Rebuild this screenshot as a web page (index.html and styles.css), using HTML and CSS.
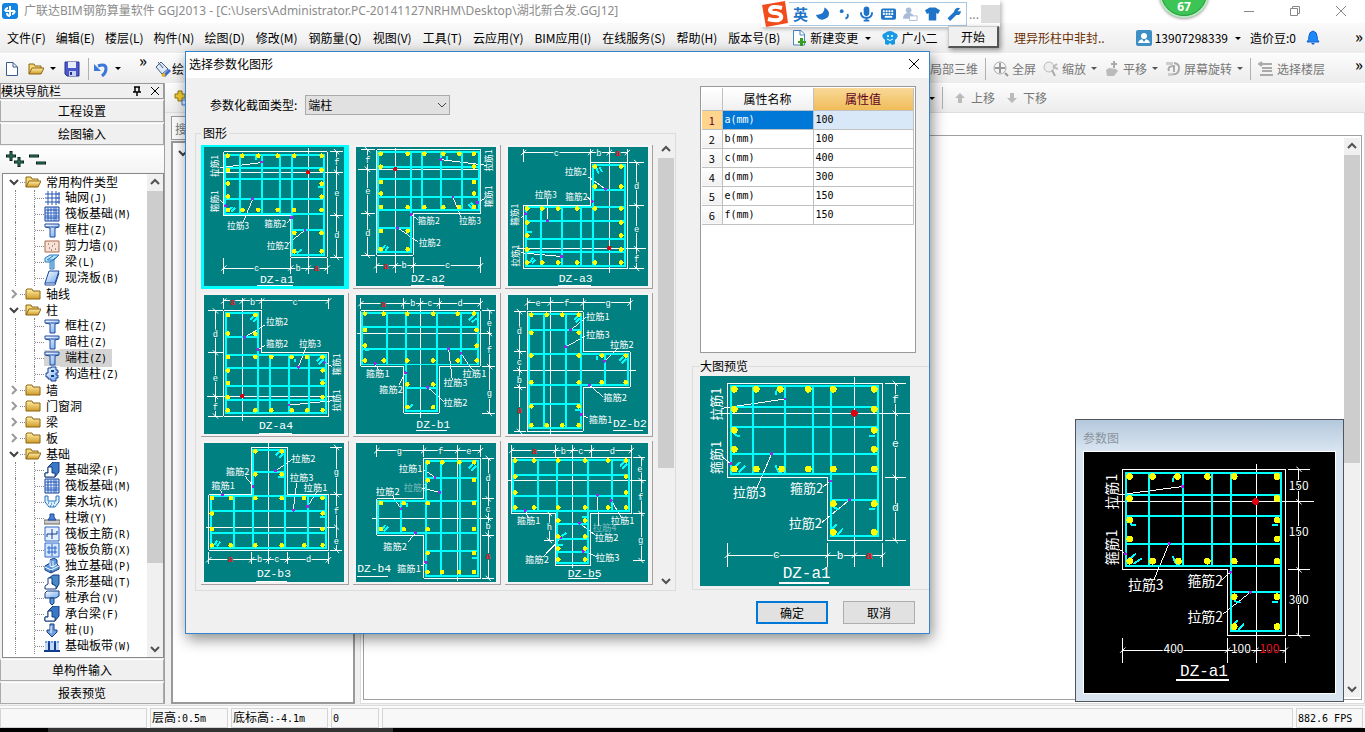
FILE: index.html
```html
<!DOCTYPE html>
<html lang="zh-CN">
<head>
<meta charset="utf-8">
<title>广联达BIM钢筋算量软件 GGJ2013</title>
<link rel="stylesheet" href="styles.css">
</head>
<body>
<svg class="defs" aria-hidden="true">
  <defs>
    <marker id="tick" markerUnits="userSpaceOnUse" markerWidth="20" markerHeight="20" viewBox="-10 -10 20 20" orient="auto"><path d="M-8 8L8 -8" stroke="#fff" stroke-width="3"/></marker>
    <linearGradient id="gold" x2="0" y2="1"><stop offset="0" stop-color="#fff0a8"/><stop offset="1" stop-color="#d09a28"/></linearGradient>
    <linearGradient id="blue" x2="1" y2="1"><stop offset="0" stop-color="#fff"/><stop offset="1" stop-color="#6fa8ee"/></linearGradient>
    <symbol id="folder" viewBox="0 0 16 16"><path d="M1 4V13H15V5H8L7 3H2Z" fill="url(#gold)" stroke="#8c6414"/></symbol>
    <symbol id="open" viewBox="0 0 16 16"><path d="M1 13V3H6L7 5H13V7" fill="#f5d878" stroke="#8c6414"/><path d="M1 13L4 7H16L13 13Z" fill="url(#gold)" stroke="#8c6414"/></symbol>
    <symbol id="down" viewBox="0 0 12 12"><path d="M2 4L6 8L10 4" fill="none" stroke="currentColor" stroke-width="2"/></symbol>
    <symbol id="up" viewBox="0 0 12 12"><path d="M2 8L6 4L10 8" fill="none" stroke="currentColor" stroke-width="2"/></symbol>
    <symbol id="right" viewBox="0 0 12 12"><path d="M4 2L8 6L4 10" fill="none" stroke="currentColor" stroke-width="2"/></symbol>
    <symbol id="net" viewBox="0 0 16 16"><path d="M4 1V15M8 1V15M12 1V15M1 4H15M1 8H15M1 12H15" stroke="#2456b4" fill="none"/><path d="M14 3h2v2h-2zM14 7h2v2h-2zM14 11h2v2h-2z" fill="#fff" stroke="#2456b4"/></symbol>
    <symbol id="raft" viewBox="0 0 16 16"><path d="M1 1H15V15H1Z" fill="#dceaff" stroke="#123c90" stroke-width="1"/><path d="M4 4H12V12H4Z" fill="#fff" stroke="#123c90"/><path d="M7 1V15M10 1V15M1 7H15M1 10H15M4 1V4M12 1V4M4 12V15M12 12V15M1 4H4M12 4H15M1 12H4M12 12H15" stroke="#2c66c8"/></symbol>
    <symbol id="col" viewBox="0 0 16 16"><path d="M1 2H15V5L11 6V15H6V6L1 5Z" fill="url(#blue)" stroke="#1c4aa0"/><path d="M2 5H14" stroke="#1c4aa0"/></symbol>
    <symbol id="wall" viewBox="0 0 16 16"><path d="M1 3H15V14H1Z" fill="#f6e2d6" stroke="#a86848"/><path d="M4 6h1M8 8h1M5 10h1M11 11h1M10 6h1M7 12h1" stroke="#704020" stroke-width="1"/></symbol>
    <symbol id="beam" viewBox="0 0 16 16"><path d="M1 4L6 1H15L10 6V15H6V8L1 8Z" fill="#b8e4fa" stroke="#2c78bc"/><path d="M3 6L9 2M6 8L14 2M8 14V7M10 6H4" stroke="#2c78bc"/></symbol>
    <symbol id="slab" viewBox="0 0 16 16"><path d="M5 1H15L11 13H1Z" fill="url(#blue)" stroke="#1c4aa0"/><path d="M1 13V15H11L15 3" fill="none" stroke="#1c4aa0"/></symbol>
    <symbol id="ccol" viewBox="0 0 16 16"><path d="M4 2H7V1H12V4H14V7H12V9H14V12H12V15H7V13H4V11H2V7H4Z" fill="url(#blue)" stroke="#123c90" stroke-width="1"/><path d="M7 5H10M7 10H10" stroke="#123c90" stroke-width="2"/></symbol>
    <symbol id="fbeam" viewBox="0 0 16 16"><path d="M1 15V11H4V5L9 0H15V10L11 15Z" fill="#3878c4" stroke="#123c80"/><path d="M1 15V11H4V5H8V11H11V15Z" fill="#fff" stroke="#123c80"/></symbol>
    <symbol id="strip" viewBox="0 0 16 16"><path d="M5 4L9 1H15V10L12 15Z" fill="#4888c8" stroke="#123c80"/><path d="M1 15V12L4 10V4H8V10L12 12V15Z" fill="#fff" stroke="#123c80"/></symbol>
    <symbol id="pit" viewBox="0 0 16 16"><path d="M1 2H4V7H12V2H15V8L11 13H5L1 8Z" fill="#d8f0ff" stroke="#2870c0"/><path d="M4 9h1M7 10h1M10 9h1M6 12h1M9 12h1" stroke="#105090"/></symbol>
    <symbol id="pier" viewBox="0 0 16 16"><path d="M0 10H16V14H0Z" fill="#ccc" stroke="#666"/><path d="M4 10L6 7V4H10V7L12 10Z" fill="#4a80d8" stroke="#1c4aa0"/></symbol>
    <symbol id="mesh" viewBox="0 0 16 16"><path d="M1 1H15V15H1Z" fill="#e4f0ff" stroke="#2c66c8"/><path d="M8 3V13M3 8H13M3 8V11M13 8V5" stroke="#123c90" fill="none"/></symbol>
    <symbol id="mesh2" viewBox="0 0 16 16"><path d="M1 1H15V15H1Z" fill="#d4e6ff" stroke="#2c66c8"/><path d="M8 2V14M3 6H13M3 10H13M5 4V12M11 4V12" stroke="#2c66c8" fill="none"/></symbol>
    <symbol id="found" viewBox="0 0 16 16"><path d="M1 8L6 5V2L10 0L13 2V6L15 8V11L7 15L1 12Z" fill="#5a98dc" stroke="#123c80"/><path d="M6 2V8L9 9V3M1 9L7 12L15 8M9 9L13 6" fill="none" stroke="#fff"/><path d="M7 12V15" stroke="#123c80"/></symbol>
    <symbol id="cap" viewBox="0 0 16 16"><path d="M1 3L3 1H15V6L12 8H1Z" fill="url(#blue)" stroke="#123c80"/><path d="M6 8V13L8 15L10 13V8Z" fill="#5a98dc" stroke="#123c80"/></symbol>
    <symbol id="pile" viewBox="0 0 16 16"><path d="M6 2H10V8H13V10L8 15L3 10V8H6Z" fill="#6fa0e0" stroke="#123c80"/><path d="M7 4V11" stroke="#fff"/></symbol>
    <symbol id="band" viewBox="0 0 16 16"><path d="M1 3H15V14H1Z" fill="#c4d8fa"/><path d="M0 13H16M5 3V13M11 3V13" stroke="#123c90" stroke-width="2"/><path d="M1 4H15" stroke="#2c66c8" stroke-dasharray="2 1"/></symbol>
  </defs>
</svg>
<div class="app">
  <header class="titlebar">
    <svg class="logo" viewBox="0 0 16 16"><rect width="16" height="16" rx="3" fill="#1583e0"/><path d="M3 8H13M8 3V13M3 8Q4 5 6 5M13 8Q12 11 10 11M8 13Q5 13 5 10" stroke="#fff" stroke-width="2" fill="none"/></svg>
    <h1>广联达BIM钢筋算量软件 GGJ2013 - [C:\Users\Administrator.PC-20141127NRHM\Desktop\湖北新合发.GGJ12]</h1>
    <div class="winbtns">
      <button aria-label="最小化"><svg viewBox="0 0 12 12"><path d="M1 6.500H11" stroke="#888"/></svg></button>
      <button aria-label="还原"><svg viewBox="0 0 12 12"><path d="M1.500 3.500H8.500V10.500H1.500ZM3.500 3.500V1.500H10.500V8.500H8.500" fill="none" stroke="#888"/></svg></button>
      <button aria-label="关闭"><svg viewBox="0 0 12 12"><path d="M1 1L11 11M11 1L1 11" stroke="#888"/></svg></button>
    </div>
  </header>
  <nav class="menubar">
    <button>文件(F)</button><button>编辑(E)</button><button>楼层(L)</button><button>构件(N)</button><button>绘图(D)</button><button>修改(M)</button><button>钢筋量(Q)</button><button>视图(V)</button><button>工具(T)</button><button>云应用(Y)</button><button>BIM应用(I)</button><button>在线服务(S)</button><button>帮助(H)</button><button>版本号(B)</button>
    <button class="ic"><svg class="i16" viewBox="0 0 16 16"><path d="M2.500 .5H10L13.500 4V15H2.500Z" fill="#fff" stroke="#4a88c0"/><path d="M9 .5V5H13" fill="none" stroke="#4a88c0"/><path d="M9 8h3v3h3v2h-3v3h-3v-3H7v-2h2z" fill="#38a020"/></svg>新建变更<i class="tri"></i></button>
    <button class="ic"><svg class="i16" viewBox="0 0 16 16"><path d="M3 3Q8 -1 13 3Q17 4 15 8L13 10V14L10 15L8 13L6 15L3 14V10L1 8Q-1 4 3 3Z" fill="#189ae8"/><circle cx="6" cy="6" r="1" fill="#fff"/><circle cx="10" cy="6" r="1" fill="#fff"/><path d="M5 9Q8 12 11 9" stroke="#fff" fill="none"/></svg>广小二</button>
    <div class="account">
      <a class="news" href="#">理异形柱中非封..</a>
      <button class="ic"><svg class="i16" viewBox="0 0 16 16"><rect width="16" height="16" rx="2" fill="#3d8fc4"/><circle cx="8" cy="6" r="3" fill="#fff"/><path d="M2 13Q3 9 8 9T14 13Z" fill="#fff"/><path d="M6 9L8 12L10 9" fill="#3d8fc4"/></svg>13907298339<i class="tri"></i></button>
      <span>造价豆:0</span>
      <svg class="i16" viewBox="0 0 16 16"><path d="M2 12Q4 10 4 6Q4 2 8 1Q12 2 12 6Q12 10 14 12Z" fill="#1e88f8" stroke="#1460c8"/><path d="M6 13H10L8 15Z" fill="#1460c8"/></svg>
      <b class="more">»</b>
    </div>
  </nav>
  <div class="toolbar">
    <button aria-label="新建"><svg class="i16" viewBox="0 0 16 16"><path d="M2.500 1.500H9L13.500 6V14.500H2.500Z" fill="#fff" stroke="#3c5a8c"/><path d="M9 1.500V6H13" fill="none" stroke="#3c5a8c"/></svg></button>
    <button class="openbtn" aria-label="打开"><svg class="i16"><use href="#open"/></svg><i class="tri"></i></button>
    <button aria-label="保存"><svg class="i16" viewBox="0 0 16 16"><path d="M1 1H15V15H3L1 13Z" fill="#4a58c8" stroke="#283090"/><path d="M4 1H12V7H4Z" fill="#e8ecff"/><path d="M5 10H12V15H5Z" fill="#c8d0f0"/><path d="M6 11h2v3H6z" fill="#283090"/></svg></button>
    <i class="sep"></i>
    <button class="undo" aria-label="撤销"><svg class="i16" viewBox="0 0 16 16"><path d="M5 5Q13 2 13 8Q13 12 9 15" fill="none" stroke="#3c78dc" stroke-width="3"/><path d="M1 3V10H8Z" fill="#3c78dc"/></svg><i class="tri"></i></button>
    <b class="more">»</b>
    <button class="ic paint"><svg class="i16" viewBox="0 0 16 16"><path d="M6 1L13 8L7 13L1 6Z" fill="#dce8f8" stroke="#445a80"/><path d="M3 1L8 7" stroke="#445a80"/><path d="M9 15L15 9" stroke="#3868d0" stroke-width="3"/><path d="M7 15L10 13" stroke="#e8b020" stroke-width="3"/></svg>绘</button>
    <div class="viewtools">
      <button>局部三维</button><i class="sep"></i>
      <button class="ic"><svg class="i16" viewBox="0 0 16 16"><circle cx="7" cy="7" r="6" fill="none" stroke="#aaa"/><path d="M7 2V12M2 7H12M12 12L15 15" stroke="#999" stroke-width="2"/></svg>全屏</button>
      <button class="ic"><svg class="i16" viewBox="0 0 16 16"><circle cx="6" cy="6" r="5" fill="#eee" stroke="#bbb"/><path d="M9 9L12 15" stroke="#aaa" stroke-width="2"/><path d="M10 6L14 3M10 6L15 8" stroke="#bbb" stroke-width="2"/></svg>缩放<i class="tri"></i></button>
      <button class="ic"><svg class="i16" viewBox="0 0 16 16"><path d="M2 9L5 7L12 8L14 10L10 15H3Z" fill="#bbb"/><path d="M10 0V7M7 3H13" stroke="#aaa" stroke-width="2"/></svg>平移<i class="tri"></i></button>
      <button class="ic"><svg class="i16" viewBox="0 0 16 16"><path d="M1 1H8V4H1ZM3 12H8V15H3Z" fill="#ccc"/><path d="M9 2Q15 3 14 8Q13 14 8 13M4 10Q2 5 9 5V11" fill="none" stroke="#aaa" stroke-width="2"/></svg>屏幕旋转<i class="tri"></i></button>
      <i class="sep"></i>
      <button class="ic"><svg class="i16" viewBox="0 0 16 16"><path d="M1 3H14M4 7H14M4 10H14M2 14H15M4 1L1 3L4 5" fill="none" stroke="#aaa" stroke-width="2"/></svg>选择楼层</button>
      <b class="more">»</b>
    </div>
  </div>
  <main class="work">
    <aside class="dock">
      <div class="dockhead"><h2>模块导航栏</h2><svg class="i12" viewBox="0 0 12 12"><path d="M3 2H9M4 2V7M8 2V7M2 7H10M6 7V11" stroke="#000" stroke-width="1.500" fill="none"/></svg><svg class="i12" viewBox="0 0 12 12"><path d="M2 2L10 10M10 2L2 10" stroke="#000"/></svg></div>
      <button class="bar">工程设置</button>
      <button class="bar">绘图输入</button>
      <div class="treetools"><svg viewBox="0 0 40 16"><path d="M5 0V10M0 5H10M13 6V16M8 11H18M23 5H33M30 12H40" stroke="#082018" stroke-width="3"/><path d="M5 1V9M1 5H9M13 7V15M9 11H17M24 5H32M31 12H39" stroke="#2e8a68" stroke-width="1"/></svg></div>
      <div class="treebox">
        <ul class="tree">
          <li class="row"><svg class="i12"><use href="#down"/></svg><i class="st"></i><svg class="i16"><use href="#open"/></svg><span>常用构件类型</span></li>
          <li class="leaf"><i></i><i></i><svg class="i16"><use href="#net"/></svg><span>轴网<kbd>(J)</kbd></span></li>
          <li class="leaf"><i></i><i></i><svg class="i16"><use href="#raft"/></svg><span>筏板基础<kbd>(M)</kbd></span></li>
          <li class="leaf"><i></i><i></i><svg class="i16"><use href="#col"/></svg><span>框柱<kbd>(Z)</kbd></span></li>
          <li class="leaf"><i></i><i></i><svg class="i16"><use href="#wall"/></svg><span>剪力墙<kbd>(Q)</kbd></span></li>
          <li class="leaf"><i></i><i></i><svg class="i16"><use href="#beam"/></svg><span>梁<kbd>(L)</kbd></span></li>
          <li class="leaf"><i></i><i></i><svg class="i16"><use href="#slab"/></svg><span>现浇板<kbd>(B)</kbd></span></li>
          <li class="row shut"><svg class="i12"><use href="#right"/></svg><i class="st"></i><svg class="i16"><use href="#folder"/></svg><span>轴线</span></li>
          <li class="row"><svg class="i12"><use href="#down"/></svg><i class="st"></i><svg class="i16"><use href="#open"/></svg><span>柱</span></li>
          <li class="leaf"><i></i><i></i><svg class="i16"><use href="#col"/></svg><span>框柱<kbd>(Z)</kbd></span></li>
          <li class="leaf"><i></i><i></i><svg class="i16"><use href="#col"/></svg><span>暗柱<kbd>(Z)</kbd></span></li>
          <li class="leaf sel"><i></i><i></i><svg class="i16"><use href="#col"/></svg><span>端柱<kbd>(Z)</kbd></span></li>
          <li class="leaf"><i></i><i></i><svg class="i16"><use href="#ccol"/></svg><span>构造柱<kbd>(Z)</kbd></span></li>
          <li class="row shut"><svg class="i12"><use href="#right"/></svg><i class="st"></i><svg class="i16"><use href="#folder"/></svg><span>墙</span></li>
          <li class="row shut"><svg class="i12"><use href="#right"/></svg><i class="st"></i><svg class="i16"><use href="#folder"/></svg><span>门窗洞</span></li>
          <li class="row shut"><svg class="i12"><use href="#right"/></svg><i class="st"></i><svg class="i16"><use href="#folder"/></svg><span>梁</span></li>
          <li class="row shut"><svg class="i12"><use href="#right"/></svg><i class="st"></i><svg class="i16"><use href="#folder"/></svg><span>板</span></li>
          <li class="row"><svg class="i12"><use href="#down"/></svg><i class="st"></i><svg class="i16"><use href="#open"/></svg><span>基础</span></li>
          <li class="leaf"><i></i><i></i><svg class="i16"><use href="#fbeam"/></svg><span>基础梁<kbd>(F)</kbd></span></li>
          <li class="leaf"><i></i><i></i><svg class="i16"><use href="#raft"/></svg><span>筏板基础<kbd>(M)</kbd></span></li>
          <li class="leaf"><i></i><i></i><svg class="i16"><use href="#pit"/></svg><span>集水坑<kbd>(K)</kbd></span></li>
          <li class="leaf"><i></i><i></i><svg class="i16"><use href="#pier"/></svg><span>柱墩<kbd>(Y)</kbd></span></li>
          <li class="leaf"><i></i><i></i><svg class="i16"><use href="#mesh"/></svg><span>筏板主筋<kbd>(R)</kbd></span></li>
          <li class="leaf"><i></i><i></i><svg class="i16"><use href="#mesh2"/></svg><span>筏板负筋<kbd>(X)</kbd></span></li>
          <li class="leaf"><i></i><i></i><svg class="i16"><use href="#found"/></svg><span>独立基础<kbd>(P)</kbd></span></li>
          <li class="leaf"><i></i><i></i><svg class="i16"><use href="#strip"/></svg><span>条形基础<kbd>(T)</kbd></span></li>
          <li class="leaf"><i></i><i></i><svg class="i16"><use href="#cap"/></svg><span>桩承台<kbd>(V)</kbd></span></li>
          <li class="leaf"><i></i><i></i><svg class="i16"><use href="#fbeam"/></svg><span>承台梁<kbd>(F)</kbd></span></li>
          <li class="leaf"><i></i><i></i><svg class="i16"><use href="#pile"/></svg><span>桩<kbd>(U)</kbd></span></li>
          <li class="leaf"><i></i><i></i><svg class="i16"><use href="#band"/></svg><span>基础板带<kbd>(W)</kbd></span></li>
        </ul>
        <div class="scroll treescroll"><svg class="i12"><use href="#up"/></svg><i class="thumb"></i><i class="rest"></i><svg class="i12"><use href="#down"/></svg></div>
      </div>
      <button class="bar">单构件输入</button>
      <button class="bar">报表预览</button>
    </aside>
    <section class="stage">
      <div class="toolbar second">
        <svg class="i16" viewBox="0 0 16 16"><path d="M5 1h4v3h3v4H9v3H5V8H2V4h3z" fill="#f0cc30" stroke="#907010"/><path d="M9 10H15V15H9Z" fill="#dce8ff" stroke="#4878c0"/></svg>
        <div class="movetools"><i class="tri"></i><i class="sep"></i>
          <button class="ic"><svg class="i12" viewBox="0 0 12 12"><path d="M6 1L11 6H8V11H4V6H1Z" fill="#bbb"/></svg>上移</button>
          <button class="ic"><svg class="i12" viewBox="0 0 12 12"><path d="M6 11L11 6H8V1H4V6H1Z" fill="#bbb"/></svg>下移</button></div>
      </div>
      <div class="panes">
        <div class="listpane"><input type="text" aria-label="搜索构件" placeholder="搜索构件..."><div class="complist"><svg class="i12"><use href="#down"/></svg></div></div>
        <div class="canvaspane"><div class="canvas"><div class="scroll"><svg class="i12"><use href="#up"/></svg><i class="thumb"></i><i class="rest"></i><svg class="i12"><use href="#down"/></svg></div></div></div>
      </div>
    </section>
  </main>
  <footer class="status"><span class="s1"></span><span class="s2">层高<kbd>:0.5m</kbd></span><span class="s3">底标高<kbd>:-4.1m</kbd></span><span class="s4"><kbd>0</kbd></span><span class="s5"></span><span class="s6"><kbd>882.6 FPS</kbd></span></footer>
  <div class="taskbar"><i></i></div>
</div>

<div class="ime">
  <svg class="sogou" viewBox="0 0 28 28"><path d="M1 5L24 1L27 23L5 27Z" fill="#f04c1c"/><path d="M21 8Q10 5 9 10Q9 13 15 13Q21 14 20 18Q18 22 7 19" fill="none" stroke="#fff" stroke-width="4"/></svg>
  <div class="imebar">
    <b>英</b>
    <svg viewBox="0 0 16 16"><path d="M10 1Q11 8 1 9Q3 14 8 14Q15 13 15 7Q14 3 10 1Z" fill="#1e74c8"/></svg>
    <svg viewBox="0 0 16 16"><circle cx="5" cy="5" r="2" fill="#1e74c8"/><path d="M11 8Q13 11 9 13" stroke="#1e74c8" stroke-width="2" fill="none"/></svg>
    <svg viewBox="0 0 16 16"><rect x="5" width="6" height="10" rx="3" fill="#1e74c8"/><path d="M2 6Q2 12 8 12T14 6M8 12V15M5 15H11" fill="none" stroke="#1e74c8" stroke-width="2"/></svg>
    <svg viewBox="0 0 16 16"><rect y="2" width="16" height="12" rx="2" fill="#1e74c8"/><path d="M2 5H14M2 8H14" stroke="#fff" stroke-dasharray="2 1" stroke-width="2"/><path d="M4 11H12" stroke="#fff" stroke-width="2"/></svg>
    <svg viewBox="0 0 16 16"><circle cx="6" cy="4" r="3" fill="#a8bcd8"/><path d="M0 13Q0 7 6 7T12 13Z" fill="#a8bcd8"/><path d="M7 10H15V15H7Z" fill="#fff" stroke="#a8bcd8"/></svg>
    <svg viewBox="0 0 16 16"><path d="M5 1H11L16 4L14 8L12 7V15H4V7L2 8L0 4Z" fill="#1e74c8"/></svg>
    <svg viewBox="0 0 16 16"><path d="M2 14L9 7" stroke="#1e74c8" stroke-width="4"/><path d="M14 2L11 5L15 5Q14 10 10 9Q6 8 8 4Q10 0 14 2Z" fill="#1e74c8"/></svg>
  </div>
  <span class="dots">...</span><i class="blank"></i>
</div>
<button class="start">开始</button>
<div class="ball">67</div>

<section class="dialog" role="dialog" aria-labelledby="dlg">
  <header><h2 id="dlg">选择参数化图形</h2><button aria-label="关闭"><svg class="i12" viewBox="0 0 12 12"><path d="M1 1L11 11M11 1L1 11" stroke="#000"/></svg></button></header>
  <div class="dbody">
    <div class="left">
      <div class="kind"><label for="kind">参数化截面类型:</label><div class="combo"><select id="kind"><option>端柱</option></select><svg class="i12" viewBox="0 0 12 12"><path d="M2 4L6 8L10 4" fill="none" stroke="#444"/></svg></div></div>
      <fieldset class="shapes"><legend>图形</legend>
        <div class="grid">
          <button class="sel"><svg class="dz" viewBox="57 290 420 418"><path class="w" d="M116 304H427V622H317V496H116ZM370 293V672M90 366H475M116 625V672M317 625V672M427 625V672M435 304H475M435 496H475M435 622H475M105 352L228 337M203 446L175 515M105 450L121 467M305 520L320 502M310 580L360 540M217 706H323"/><path class="dim" d="M116 654H317H370H427"/><path class="dim" d="M455 304V366V496V622"/><path class="c" d="M121 313H418V490H121ZM165 313V490M230 313V490M284 313V490M321 313V615H418V490M121 352H418M121 387H418M121 446H418M321 540H418M130 482L140 470M138 485L150 472M212 318V330M400 410H416M335 610L350 598"/><path class="y" d="M128 316h0M172 316h0M220 316h0M278 316h0M328 316h0M410 316h0M128 359h0M410 359h0M128 400h0M410 400h0M128 439h0M410 439h0M128 479h0M172 479h0M220 479h0M278 479h0M328 479h0M410 479h0M328 548h0M410 548h0M328 604h0M410 604h0"/><path class="m" d="M230 335h0M203 446h0M121 467h0M320 502h0M360 540h0"/><path class="r" d="M370 366h0"/><text x="126" y="536">拉筋3</text><text x="238" y="532">箍筋2</text><text x="245" y="598">拉筋2</text><text transform="translate(100 380) rotate(-90)">拉筋1</text><text transform="translate(100 486) rotate(-90)">箍筋1</text><g class="d"><text x="448" y="345">f</text><text x="448" y="438">e</text><text x="448" y="564">d</text><text x="207" y="662">c</text><text x="332" y="662">b</text><text class="red" x="387" y="662">a</text></g><text class="n" x="225" y="700">DZ-a1</text></svg></button>
          <button><svg class="dz" viewBox="513 290 420 418"><path class="w" d="M575 298H887V490H685V616H575ZM631 292V668M520 357H887M575 622V668M685 622V668M887 622V668M528 298H570M528 490H570M528 616H570M768 328L905 345M804 440L828 500M878 457L900 445M678 493L700 510M638 533L698 575M678 706H777"/><path class="dim" d="M575 647H631H685H887"/><path class="dim" d="M547 298V357V490V616"/><path class="c" d="M580 304H881V480H580ZM678 304V605H580V480M711 304V480M768 304V480M830 304V480M580 349H881M580 387H881M580 440H881M580 533H678M858 458L870 470M850 463L862 475M590 600L600 585M600 602L610 590M785 316V328"/><path class="y" d="M587 310h0M668 310h0M718 310h0M775 310h0M823 310h0M867 310h0M587 349h0M867 349h0M587 395h0M867 395h0M587 430h0M867 430h0M587 471h0M668 471h0M718 471h0M775 471h0M823 471h0M867 471h0M587 542h0M668 542h0M587 598h0M668 598h0"/><path class="m" d="M768 328h0M804 440h0M878 457h0M678 493h0M638 533h0"/><path class="r" d="M631 357h0"/><text x="698" y="523">箍筋2</text><text x="822" y="523">拉筋3</text><text x="701" y="589">拉筋2</text><text transform="translate(920 364) rotate(-90)">拉筋1</text><text transform="translate(920 472) rotate(-90)">箍筋1</text><g class="d"><text x="540" y="338">f</text><text x="540" y="430">e</text><text x="540" y="558">d</text><text class="red" x="595" y="658">a</text><text x="649" y="654">b</text><text x="780" y="655">c</text></g><text class="n" x="678" y="696">DZ-a2</text></svg></button>
          <button><svg class="dz" viewBox="24 201 420 416"><path class="w" d="M71 377H272V247H382V565H71ZM328 200V578M50 506H438M71 205V245M272 205V247M382 205V247M387 247H432M387 377H432M387 565H432M265 290L317 327M262 350L277 364M142 355V422M62 415L76 401M62 518L185 529M174 615H272"/><path class="dim" d="M71 217H272H328H382"/><path class="dim" d="M410 247V377V506V565"/><path class="c" d="M78 381H375V558H78ZM123 381V558M186 381V558M243 381V558M279 558V255H375V381M78 423H375M78 477H375M78 515H375M279 329H375M288 262L296 280M298 260L306 276M82 455H96M88 548L100 532M96 550L106 538"/><path class="y" d="M284 259h0M364 259h0M284 319h0M364 319h0M82 385h0M127 385h0M175 385h0M232 385h0M284 385h0M364 385h0M82 427h0M364 427h0M82 466h0M364 466h0M82 508h0M364 508h0M82 547h0M127 547h0M175 547h0M232 547h0M284 547h0M364 547h0"/><path class="m" d="M317 327h0M277 364h0M142 422h0M76 401h0M185 529h0"/><path class="r" d="M328 504h0"/><text x="194" y="285">拉筋2</text><text x="104" y="354">拉筋3</text><text x="196" y="360">箍筋2</text><text transform="translate(55 437) rotate(-90)">箍筋1</text><text transform="translate(57 560) rotate(-90)">拉筋1</text><g class="d"><text x="161" y="229">c</text><text x="289" y="229">b</text><text class="red" x="346" y="228">a</text><text x="402" y="327">d</text><text x="402" y="457">e</text><text x="402" y="545">f</text></g><text class="n" x="176" y="605">DZ-a3</text></svg></button>

          <button><svg class="dz" viewBox="27 20 420 418"><path class="w" d="M86 68H200V194H401V384H86ZM142 28V398M35 325H420M86 28V62M200 28V62M401 28V62M40 68H84M40 194H84M40 384H84M149 147L210 110M188 184L210 172M310 237L333 180M388 222L412 235M282 351L412 338M192 435H291"/><path class="dim" d="M86 38H142H200H401"/><path class="dim" d="M61 68V194V325V384"/><path class="c" d="M93 74H190V376H93ZM93 200H393V376H190M226 200V376M283 200V376M343 200V376M93 147H190M93 240H393M93 293H393M93 335H393M165 95L178 82M174 100L186 88M365 220L378 208M372 228L386 214M375 275H390M300 213V222"/><path class="y" d="M98 80h0M181 80h0M98 136h0M181 136h0M98 206h0M181 206h0M229 206h0M290 206h0M337 206h0M383 206h0M98 247h0M383 247h0M98 284h0M383 284h0M98 328h0M383 328h0M98 367h0M181 367h0M229 367h0M290 367h0M337 367h0M383 367h0"/><path class="m" d="M149 147h0M188 184h0M310 237h0M388 222h0M282 351h0"/><path class="r" d="M142 323h0"/><text x="213" y="110">拉筋2</text><text x="213" y="177">箍筋2</text><text x="312" y="177">拉筋3</text><text transform="translate(436 262) rotate(-90)">箍筋1</text><text transform="translate(436 370) rotate(-90)">拉筋1</text><g class="d"><text class="red" x="105" y="49">a</text><text x="165" y="50">b</text><text x="293" y="50">c</text><text x="53" y="147">d</text><text x="53" y="279">e</text><text x="53" y="365">f</text></g><text class="n" x="192" y="424">DZ-a4</text></svg></button>
          <button><svg class="dz" viewBox="486 20 420 418"><path class="w" d="M500 68H859V235H736V376H629V235H500ZM680 28V390M490 136H895M500 28V62M629 28V62M736 28V62M859 28V62M865 68H903M865 235H903M865 376H903M543 226L555 245M634 254L615 290M764 182L775 275M801 195L835 245M701 298L750 340M667 427H758"/><path class="dim" d="M500 46H629H680H736H859"/><path class="dim" d="M887 68V136V235V376"/><path class="c" d="M505 74H852V229H505ZM637 74V370H729V74M579 74V229M801 74V229M505 117H852M505 182H852M637 299H729M825 95L838 82M834 102L848 90M645 362L655 348M512 185H525"/><path class="y" d="M512 76h0M569 76h0M640 76h0M718 76h0M791 76h0M840 76h0M512 125h0M848 125h0M512 172h0M848 172h0M512 217h0M569 217h0M640 217h0M718 217h0M791 217h0M848 217h0M640 289h0M718 289h0M640 357h0M718 357h0"/><path class="m" d="M543 226h0M634 254h0M764 182h0M801 195h0M701 298h0"/><g class="big"><text x="515" y="267">箍筋1</text><text x="555" y="314">箍筋2</text><text x="749" y="293">拉筋3</text><text x="806" y="267">拉筋1</text><text x="749" y="354">拉筋2</text></g><g class="d"><text class="red" x="560" y="55">a</text><text x="649" y="54">b</text><text x="700" y="54">c</text><text x="791" y="54">d</text><text x="879" y="112">e</text><text x="879" y="193">f</text><text x="879" y="325">g</text></g><text class="n" x="667" y="421">DZ-b1</text></svg></button>
          <button><svg class="dz" viewBox="24 20 420 418"><path class="w" d="M82 70H250V190H391V298H250V430H82ZM151 25V438M38 247H408M82 28V66M250 28V66M391 28V66M42 70H78M42 190H78M42 298H78M42 430H78M212 125L258 88M196 176L256 144M313 219L355 180M268 291L308 325M244 379L265 390M340 427H430"/><path class="dim" d="M82 44H151H250H391"/><path class="dim" d="M58 70V190V247V298V430"/><path class="c" d="M88 76H244V420H88ZM88 198H384V291H88M132 76V420M198 76V420M315 198V291M88 126H244M88 349H244M222 95L234 82M228 102L240 90M358 218L370 206M366 226L380 212M290 202V216M225 365H240"/><path class="y" d="M94 79h0M140 79h0M187 79h0M236 79h0M94 133h0M236 133h0M94 202h0M236 202h0M305 202h0M377 202h0M94 283h0M236 283h0M305 283h0M377 283h0M94 355h0M236 355h0M94 412h0M140 412h0M187 412h0M236 412h0"/><path class="m" d="M212 125h0M196 176h0M313 219h0M268 291h0M244 379h0"/><g class="big"><text x="258" y="96">拉筋1</text><text x="258" y="150">拉筋3</text><text x="330" y="178">拉筋2</text><text x="310" y="338">箍筋2</text><text x="266" y="405">箍筋1</text></g><g class="d"><text x="106" y="54">e</text><text x="192" y="54">f</text><text x="317" y="54">g</text><text x="50" y="136">d</text><text x="50" y="232">c</text><text x="50" y="284">b</text><text class="red" x="50" y="374">a</text></g><text class="n" x="339" y="418">DZ-b2</text></svg></button>

          <button><svg class="dz" viewBox="27 465 420 418"><path class="w" d="M41 620H170V478H277V620H401V788H41ZM220 465V830M32 718H420M41 793V830M170 793V830M277 793V830M401 793V830M405 478H440M405 620H440M405 788H440M242 549L290 515M174 595L150 565M83 621L75 605M295 667L305 585M338 656L365 612M183 880H275"/><path class="dim" d="M41 816H170H220H277H401"/><path class="dim" d="M425 478V620V718V788"/><path class="c" d="M48 625H393V780H48ZM175 780V485H271V780M117 625V780M340 625V780M48 668H393M48 735H393M175 551H271M242 502L254 490M252 510L264 498M58 772L66 758M64 776L76 762M375 688H390M250 568H266"/><path class="y" d="M181 490h0M260 490h0M181 559h0M260 559h0M50 631h0M107 631h0M181 631h0M260 631h0M328 631h0M383 631h0M50 677h0M383 677h0M50 724h0M383 724h0M50 773h0M107 773h0M181 773h0M260 773h0M328 773h0M383 773h0"/><path class="m" d="M242 549h0M174 595h0M83 621h0M295 667h0M338 656h0"/><g class="big"><text x="290" y="522">拉筋2</text><text x="92" y="560">箍筋2</text><text x="284" y="580">拉筋3</text><text x="48" y="603">箍筋1</text><text x="326" y="608">拉筋1</text></g><g class="d"><text class="red" x="98" y="824">a</text><text x="186" y="824">b</text><text x="238" y="824">c</text><text x="333" y="824">d</text><text x="417" y="562">g</text><text x="417" y="680">f</text><text x="417" y="768">e</text></g><text class="n" x="186" y="868">DZ-b3</text></svg></button>
          <button><svg class="dz" viewBox="483 465 420 418"><path class="w" d="M686 511H857V872H686V742H545V633H686ZM788 470V880M530 691H895M545 470V508M686 470V508M857 470V508M862 511H898M862 633H898M862 742H898M862 872H898M720 568L685 545M735 614L680 600M618 663L590 620M661 735L640 762M692 824L678 836M486 867H578"/><path class="dim" d="M545 488H686H788H857"/><path class="dim" d="M880 511V633V691V742V872"/><path class="c" d="M692 519H850V865H692ZM692 639H550V735H692M692 639H850M692 735H850M619 639V735M737 519V865M796 519V865M692 570H850M692 789H850M822 540L834 528M830 548L844 534M560 726L570 712M566 730L580 716M635 645V658M832 810H846"/><path class="y" d="M698 523h0M742 523h0M793 523h0M838 523h0M698 577h0M838 577h0M557 646h0M626 646h0M698 646h0M838 646h0M557 724h0M626 724h0M698 724h0M838 724h0M698 796h0M838 796h0M698 853h0M742 853h0M793 853h0M838 853h0"/><path class="m" d="M720 568h0M735 614h0M618 663h0M661 735h0M692 824h0"/><g class="big"><text x="611" y="552">拉筋1</text><text x="542" y="621">拉筋2</text><text class="faint" x="626" y="610">拉筋3</text><text x="564" y="787">箍筋2</text><text x="606" y="852">箍筋1</text></g><g class="d"><text x="605" y="497">g</text><text x="729" y="497">f</text><text x="814" y="497">e</text><text x="872" y="580">d</text><text x="872" y="674">c</text><text x="872" y="724">b</text><text class="red" x="872" y="815">a</text></g><text class="n" x="486" y="853">DZ-b4</text></svg></button>
          <button><svg class="dz" viewBox="24 465 420 416"><path class="w" d="M35 508H394V676H272V832H167V676H35ZM217 470V840M24 577H438M35 470V505M167 470V505M275 470V505M394 470V505M400 508H436M400 676H436M400 817H436M132 757H162M76 667L85 690M183 750L130 805M238 705L285 740M250 790L290 805M293 621L295 715M334 637L365 690M203 872H295"/><path class="dim" d="M35 487H167H217H275H394"/><path class="dim" d="M423 508V577V676V817"/><path class="dim" d="M148 676V757"/><path class="c" d="M40 514H387V669H40ZM172 514V825H265V514M114 514V669M336 514V669M40 559H387M40 623H387M172 707H265M172 752H265M172 790H265M360 535L374 520M368 542L382 526M185 745L198 734M246 686H262M175 770H188"/><path class="y" d="M46 517h0M103 517h0M175 517h0M256 517h0M325 517h0M378 517h0M46 565h0M378 565h0M46 613h0M378 613h0M46 658h0M103 658h0M175 658h0M256 658h0M325 658h0M378 658h0M175 697h0M256 697h0M175 745h0M256 745h0M175 781h0M256 781h0M175 814h0M256 814h0"/><path class="m" d="M76 667h0M183 750h0M238 705h0M250 790h0M293 621h0M334 637h0"/><g class="big"><text x="50" y="709">箍筋1</text><text x="332" y="709">拉筋1</text><text class="faint" x="278" y="728">拉筋4</text><text x="284" y="758">拉筋2</text><text x="75" y="825">箍筋2</text><text x="287" y="819">拉筋3</text></g><g class="d"><text class="red" x="95" y="497">a</text><text x="182" y="497">b</text><text x="235" y="497">c</text><text x="329" y="497">d</text><text x="412" y="552">e</text><text x="414" y="636">f</text><text x="414" y="765">g</text><text x="140" y="725">h</text></g><text class="n" x="203" y="866">DZ-b5</text></svg></button>
        </div>
        <div class="scroll shapescroll"><svg class="i12"><use href="#up"/></svg><i class="thumb"></i><i class="rest"></i><svg class="i12"><use href="#down"/></svg></div>
      </fieldset>
    </div>
    <div class="rightcol">
      <div class="props"><table>
        <thead><tr><th></th><th>属性名称</th><th class="val">属性值</th></tr></thead>
        <tbody>
          <tr class="on"><th>1</th><td>a(mm)</td><td>100</td></tr>
          <tr><th>2</th><td>b(mm)</td><td>100</td></tr>
          <tr><th>3</th><td>c(mm)</td><td>400</td></tr>
          <tr><th>4</th><td>d(mm)</td><td>300</td></tr>
          <tr><th>5</th><td>e(mm)</td><td>150</td></tr>
          <tr><th>6</th><td>f(mm)</td><td>150</td></tr>
        </tbody></table></div>
      <fieldset class="preview"><legend>大图预览</legend>
        <svg class="dz large" viewBox="30 78 630 630"><path class="w" d="M112 100H578V572H413V382H112ZM493 82V650M90 190H660M112 578V650M413 578V650M578 578V650M585 100H648M585 382H648M585 572H648M95 175L285 147M245 311L198 420M95 320L122 341M398 412L421 393M395 518L479 449"/><path class="w thick" d="M267 698H417"/><path class="dim" d="M112 616H413H493H578"/><path class="dim" d="M616 100V190V382V572"/><path class="c" d="M122 108H565V372H122ZM189 108V372M285 108V372M369 108V372M422 108V558H565V372M122 171H565M122 231H565M122 312H565M422 450H565M258 136Q256 116 272 114M135 250Q138 259 150 258M556 258H538M258 346Q260 366 275 370M136 348L152 336M146 366L166 348M432 470Q436 478 448 476M556 477H538M425 538L440 524M442 555L459 535"/><path class="y" d="M133 118h0M199 118h0M271 118h0M355 118h0M430 118h0M553 118h0M133 178h0M553 178h0M133 241h0M553 241h0M133 298h0M553 298h0M133 357h0M199 357h0M275 357h0M355 357h0M430 357h0M553 357h0M430 461h0M553 461h0M430 547h0M553 547h0"/><path class="m" d="M285 147h0M245 311h0M122 341h0M421 393h0M479 449h0"/><path class="r" d="M493 190h0"/><text x="128" y="441">拉筋3</text><text x="300" y="429">箍筋2</text><text x="296" y="534">拉筋2</text><text transform="translate(93 212) rotate(-90)">拉筋1</text><text transform="translate(93 372) rotate(-90)">箍筋1</text><g class="d"><text x="606" y="160">f</text><text x="606" y="290">e</text><text x="606" y="482">d</text><text x="249" y="625">c</text><text x="440" y="627">b</text><text class="red" x="527" y="627">a</text></g><text class="n" x="278" y="685">DZ-a1</text></svg>
      </fieldset>
      <div class="actions"><button class="primary">确定</button><button>取消</button></div>
    </div>
  </div>
</section>

<section class="param"><h2>参数图</h2>
  <svg class="dz large black" viewBox="42 123 753 726"><path class="w" d="M157 175H647V676H473V478H157ZM559 158V758M130 273H732M157 684V758M473 684V758M647 684V758M655 175H722M655 478H722M655 676H722M145 252L337 227M297 398L250 510M145 415L166 430M455 508L482 485M458 612L542 545"/><path class="w thick" d="M318 809H477"/><path class="dim" d="M157 720H473H559H647"/><path class="dim" d="M688 175V273V478V676"/><path class="c" d="M167 185H634V465H167ZM237 185V465M339 185V465M426 185V465M483 185V662H634V465M167 252H634M167 315H634M167 399H634M483 546H634M309 214Q306 195 324 192M180 338Q184 346 198 344M625 344H606M309 436Q312 460 328 463M178 444L197 430M190 460L215 443M494 568Q498 578 512 576M625 576H606M490 645L503 630M505 660L522 640"/><path class="y" d="M178 197h0M247 197h0M322 197h0M412 197h0M493 197h0M622 197h0M178 263h0M622 263h0M178 328h0M622 328h0M178 385h0M622 385h0M178 452h0M247 452h0M325 452h0M412 452h0M493 452h0M622 452h0M493 559h0M622 559h0M493 649h0M622 649h0"/><path class="m" d="M337 227h0M297 398h0M166 430h0M482 485h0M542 545h0"/><path class="r" d="M557 272h0"/><text x="173" y="538">拉筋3</text><text x="352" y="526">箍筋2</text><text x="352" y="634">拉筋2</text><text transform="translate(140 296) rotate(-90)">拉筋1</text><text transform="translate(140 464) rotate(-90)">箍筋1</text><g class="d"><text x="657" y="238">150</text><text x="657" y="375">150</text><text x="657" y="580">300</text><text x="280" y="730">400</text><text x="483" y="730">100</text><text class="red" x="569" y="730">100</text></g><text class="n" x="330" y="797">DZ-a1</text></svg>
</section>
</body>
</html>
```
FILE: styles.css
```css
* { box-sizing: border-box; }
body { margin: 0; font: 12px/16px "Noto Sans CJK SC", sans-serif; color: #000; background: #f0f0f0; overflow: hidden; }
h1, h2 { margin: 0; font-size: 12px; font-weight: 400; white-space: nowrap; }
button { font: inherit; color: inherit; border: 0; background: none; padding: 0; white-space: nowrap; }
kbd { font: 10px/16px "DejaVu Sans Mono", monospace; }
ul { list-style: none; margin: 0; padding: 0; }
svg { display: block; flex: none; }
.defs { position: absolute; width: 0; height: 0; }
.i16 { width: 16px; height: 16px; }
.i12 { width: 12px; height: 12px; }
.tri { flex: none; border: 3px solid transparent; border-top-color: currentColor; border-bottom: 0; }
.sep { flex: none; width: 1px; height: 22px; background: #b0b0b0; }
.more { font-size: 16px; font-weight: 500; line-height: 12px; align-self: flex-start; }

.app { height: 100vh; display: flex; flex-direction: column; }
.titlebar { height: 23px; flex: none; background: #fff; display: flex; align-items: center; padding: 0 18px 2px 2px; gap: 6px; color: #8c8c8c; }
.titlebar h1 { font-family: "Noto Sans", "Noto Sans CJK SC", sans-serif; }
.logo { width: 16px; height: 16px; }
.winbtns { margin-left: auto; display: flex; gap: 34px; }
.winbtns svg { width: 12px; height: 12px; }

.menubar { height: 30px; flex: none; display: flex; align-items: center; padding: 0 2px 0 7px; gap: 10px; background: linear-gradient(#fafafa, #ececec); white-space: nowrap; }
.menubar > button:nth-child(n+6) { margin-left: 1px; }
.ic { display: flex; align-items: center; gap: 3px; }
.ic .tri { margin-left: 4px; }
.account { margin-left: auto; display: flex; align-items: center; gap: 9px; }
.news { color: #6b2e00; text-decoration: none; margin-right: 22px; }
.account .more { margin-left: 25px; }

.toolbar { height: 30px; flex: none; display: flex; align-items: center; padding: 0 2px 0 4px; gap: 8px; background: linear-gradient(#fcfcfc, #ececec); border-top: 1px solid #fff; }
.openbtn, .undo { display: flex; align-items: center; gap: 6px; }
.undo { margin-left: -4px; }
.toolbar > .more { margin-left: 10px; }
.paint { gap: 1px; }
.viewtools { margin-left: auto; display: flex; align-items: center; gap: 7px; color: #777; }
.viewtools .ic .tri { color: #555; margin-left: 2px; }
.viewtools .more { margin-left: 23px; color: #000; }

.work { flex: 1; min-height: 0; display: flex; }
.dock { width: 165px; flex: none; display: flex; flex-direction: column; gap: 1px; border-right: 1px solid #a0a0a0; margin-bottom: 1px; }
.dockhead { height: 16px; flex: none; display: flex; align-items: center; gap: 6px; border: 1px solid #999; padding-right: 2px; }
.dockhead h2 { margin-right: auto; }
.bar { height: 22px; flex: none; border: 1px solid #aaa; border-top-color: #fff; background: #f0f0f0; }
.treetools { height: 26px; flex: none; display: flex; align-items: center; padding-left: 6px; background: linear-gradient(#fff, #f4f4f4); }
.treetools svg { width: 40px; height: 16px; }
.treebox { flex: 1; min-height: 0; display: flex; overflow: hidden; border: 1px solid #888; margin-left: 2px; background: #fff; }
.tree { flex: 1; min-width: 0; overflow: hidden; }
.row, .leaf { display: flex; align-items: center; height: 16px; white-space: nowrap; }
.row { padding-left: 5px; }
.row > svg:first-child { color: #404040; }
.row span { padding-left: 5px; }
.st { width: 5px; height: 1px; border-top: 1px dotted #888; }
.row.shut > svg:first-child { color: #999; }
.leaf i { width: 19px; height: 16px; border-left: 1px dotted #888; flex: none; }
.leaf i:first-child { margin-left: 12px; }
.leaf i + i { width: 10px; background: repeating-linear-gradient(90deg, #888 0 1px, transparent 1px 2px) 0 8px / 100% 1px no-repeat; }
.leaf span { padding: 0 5px; }
.leaf.sel svg, .leaf.sel span { background: #d4d4d4; }
.scroll { width: 16px; flex: none; background: #f0f0f0; color: #505050; display: flex; flex-direction: column; align-items: center; gap: 3px; padding: 2px 0; }
.thumb { width: 100%; flex: 310; background: #cdcdcd; }
.rest { flex: 216; }
.treescroll .thumb { flex: 375; }
.treescroll .rest { flex: 75; }

.stage { flex: 1; min-width: 0; display: flex; flex-direction: column; }
.second { padding: 0 318px 0 8px; border-bottom: 1px solid #ddd; }
.movetools { margin-left: auto; display: flex; align-items: center; gap: 7px; color: #777; }
.movetools .ic { gap: 5px; margin-left: 4px; }
.movetools .tri { color: #000; }
.panes { flex: 1; min-height: 0; display: flex; padding: 0 0 1px 6px; }
.listpane { width: 184px; flex: none; padding-top: 3px; display: flex; flex-direction: column; gap: 1px; }
.listpane input { height: 24px; width: 182px; border: 1px solid #999; font: inherit; padding: 0 3px; background: #fafafa; }
.complist { flex: 1; border: 2px solid #999; background: #fff; padding: 4px; color: #404040; }
.canvaspane { flex: 1; margin-left: 5px; background: #fff; padding: 22px 2px 3px; border: 1px solid #ddd; border-top: 0; }
.canvas { height: 100%; border: 1px solid #a0a0a0; display: flex; justify-content: flex-end; padding: 2px 1px 2px 0; }

.status { height: 23px; flex: none; display: flex; gap: 3px; padding: 2px 2px 0 0; background: #fafafa; border-top: 1px solid #ddd; }
.status span { border: 1px solid #d4d4d4; background: #f8f8f8; padding-left: 1px; white-space: nowrap; }
.s1 { width: 147px; } .s2 { width: 78px; } .s3 { width: 97px; } .s4 { width: 48px; } .s5 { flex: 1; } .s6 { width: 67px; }
.taskbar { height: 4px; flex: none; background: #000; padding-left: 48px; }
.taskbar i { display: block; width: 345px; height: 4px; background: #333; }

.ime { position: absolute; left: 761px; top: 0; display: flex; align-items: center; background: #fff; height: 27px; box-shadow: 2px 2px 4px #0004; }
.sogou { width: 28px; height: 28px; }
.imebar { display: flex; align-items: center; gap: 7px; height: 24px; padding: 0 4px; border: 1px solid #a8c8e4; border-left: 0; }
.imebar svg { width: 15px; height: 16px; }
.imebar b { color: #1e74c8; font-size: 15px; }
.dots { color: #888; padding: 0 2px; }
.blank { width: 19px; height: 18px; background: #ddd; }
.start { position: absolute; left: 948px; top: 26px; width: 51px; height: 22px; background: #f0f0f0; border: 1px solid #ccc; border-right: 2px solid #555; border-bottom: 2px solid #555; box-shadow: 2px 2px 5px #0006; }
.ball { position: absolute; left: 1159px; top: -32px; width: 50px; height: 50px; border-radius: 50%; background: #3cc455; border: 2px solid #b8e8c0; box-shadow: 0 1px 3px #0006; color: #fff; font: bold 12px/16px "Open Sans", sans-serif; text-align: center; padding-top: 29px; outline: 1px solid #2a9a40; outline-offset: -3px; }

.dialog { position: absolute; left: 185px; top: 51px; width: 745px; height: 583px; border: 1px solid #3584d0; background: #f0f0f0; box-shadow: 2px 5px 14px #0007; display: flex; flex-direction: column; }
.dialog > header { height: 26px; flex: none; background: #fff; display: flex; align-items: center; justify-content: space-between; padding: 0 9px 2px 3px; }
.dbody { flex: 1; display: flex; gap: 16px; padding-left: 9px; min-height: 0; }
.left { width: 481px; flex: none; padding-top: 17px; }
.kind { display: flex; align-items: center; gap: 8px; padding-left: 15px; height: 20px; }
.combo { display: grid; width: 145px; }
.combo select, .combo svg { grid-area: 1 / 1; }
.combo select { appearance: none; height: 20px; border: 1px solid #aaa; border-radius: 0; background: #e1e1e1; font: inherit; color: #000; padding: 0 2px; }
.combo svg { justify-self: end; align-self: center; margin-right: 2px; }
fieldset { margin: 0; border: 1px solid #dcdcdc; min-width: 0; }
legend { padding: 0 2px; line-height: 16px; }
.shapes { margin-top: 10px; padding: 0 1px 1px 5px; height: 466px; display: flex; gap: 5px; overflow: hidden; }
.grid { display: grid; grid-template-columns: repeat(3, 148px); gap: 4px; align-content: start; padding-top: 4px; }
.grid button { height: 144px; padding: 2px 4px 2px 3px; border-right: 1px solid #a8a0a0; border-bottom: 1px solid #a8a0a0; background: #f4f4f4; }
.grid button.sel { background: #0ff; border-color: #0ff; }
.shapescroll .thumb { flex: 315; }
.shapescroll .rest { flex: 102; }
.rightcol { flex: 1; display: flex; flex-direction: column; padding-top: 8px; }
.props { margin: 0 13px 0 8px; height: 267px; flex: none; border: 1px solid #999; background: #fff; padding: 1px; }
.props table { width: 211px; border-collapse: collapse; table-layout: fixed; font: 10px/16px "DejaVu Sans Mono", monospace; }
.props th, .props td { border: 1px solid #c0c0c0; border-left: 0; border-top: 0; padding: 0 2px; height: 19px; text-align: left; }
.props th { font: 12px/16px "Noto Sans CJK SC", sans-serif; text-align: center; background: linear-gradient(#fff, #f0f0f0); }
.props th:first-child { width: 20px; font-size: 11px; }
.props thead th { height: 22px; width: 91px; }
.props thead .val { width: 100px; background: linear-gradient(#f8d898, #f0bc58); color: #600020; }
.props .on th { background: #ffd48c; color: #600020; }
.props .on td { background: #d8e8f8; }
.props .on th + td { background: #0078d7; color: #fff; }
.preview { padding: 0 0 3px 7px; margin-top: 5px; border-right: 0; }
.preview legend { margin-left: 0; padding: 0; }
.preview .dz { width: 210px; height: 210px; margin-top: 2px; }
.actions { display: flex; justify-content: flex-end; gap: 15px; padding: 11px 14px 0 0; }
.actions button { width: 72px; height: 23px; border: 1px solid #adadad; background: #e1e1e1; }
.actions .primary { border: 2px solid #0078d7; }

.param { position: absolute; left: 1075px; top: 419px; width: 269px; border: 1px solid #50565c; background: linear-gradient(#b4c8dc, #d8e4f0 30px); padding: 10px 7px 7px; }
.param h2 { color: #8c949c; height: 21px; font-size: 12px; }

.dz { width: 140px; height: 139px; background: #008080; --bg: #008080; shape-rendering: crispEdges; font: 26px "Noto Sans CJK SC", sans-serif; }
.dz path { fill: none; }
.dz .w, .dz .dim { stroke: #fff; stroke-width: 3px; }
.dz .thick { stroke-width: 6px; }
.dz .dim { marker: url(#tick); }
.dz .c { stroke: #0ff; stroke-width: 6px; }
.dz .y { stroke: #ff0; stroke-width: 14px; stroke-linecap: round; }
.dz .m { stroke: #a020f0; stroke-width: 9px; stroke-linecap: round; }
.dz .r { stroke: #e00010; stroke-width: 13px; stroke-linecap: round; }
.dz text { fill: #fff; }
.dz .big text { font-size: 28px; }
.dz .faint { opacity: .45; }
.dz .d text { font: 26px "Liberation Mono", monospace; stroke: var(--bg); stroke-width: 6px; paint-order: stroke; }
.dz text.red, .dz .d text.red { fill: #f01020; font-weight: 700; }
.dz text.n { font: 34px "Liberation Mono", monospace; }
.dz.large { font-size: 39px; }
.dz.large .y { stroke-width: 20px; }
.dz.large .r { stroke-width: 20px; }
.dz.large .d text { font-size: 34px; }
.dz.large text.n { font-size: 48px; }
.dz.black { width: 253px; height: 243px; background: #000; --bg: #000; border: 1px solid #fff; font-size: 42px; }
.dz.black .d text { font: 36px "Noto Sans CJK SC", sans-serif; }
```
